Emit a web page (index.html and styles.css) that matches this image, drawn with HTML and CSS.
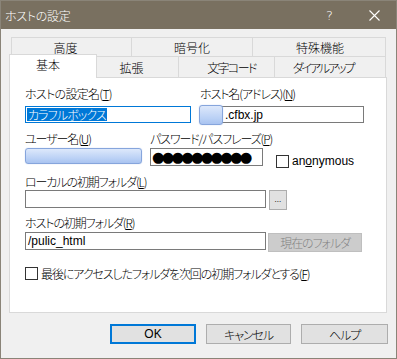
FILE: index.html
```html
<!DOCTYPE html>
<html lang="ja">
<head>
<meta charset="utf-8">
<title>ホストの設定</title>
<link rel="stylesheet" href="styles.css">
</head>
<body>
<div class="window">
  <div class="titlebar">
    <span class="title">ホストの設定</span>
    <span class="qmark">?</span>
    <span class="close"><svg width="11" height="11" viewBox="0 0 11 11"><path d="M0.5 0.5 L10.5 10.5 M10.5 0.5 L0.5 10.5" stroke="#fff" stroke-width="1.1" fill="none"/></svg></span>
  </div>
  <div class="client">
    <div class="tabstrip">
      <div class="tabrow upper">
        <div class="tab t-koudo">高度</div>
        <div class="tab t-angou">暗号化</div>
        <div class="tab t-tokushu">特殊機能</div>
      </div>
      <div class="tabrow lower">
        <div class="tab sel">基本</div>
        <div class="tab t-kakuchou">拡張</div>
        <div class="tab t-moji">文字コード</div>
        <div class="tab t-dial">ダイアルアップ</div>
      </div>
    </div>
    <div class="panel">
      <div class="row row-a">
        <div class="field f-name">
          <div class="label">ホストの設定名(<u>T</u>)</div>
          <div class="edit focus"><span class="selected">カラフルボックス</span></div>
        </div>
        <div class="field f-host">
          <div class="label">ホスト名(アドレス)(<u>N</u>)</div>
          <div class="edit host"><span class="blur blur-host"></span><span class="hosttext">.cfbx.jp</span></div>
        </div>
      </div>
      <div class="row row-b">
        <div class="field f-user">
          <div class="label">ユーザー名(<u>U</u>)</div>
          <div class="blur blur-user"></div>
        </div>
        <div class="field f-pass">
          <div class="label">パスワード/パスフレーズ(<u>P</u>)</div>
          <div class="edit pass"><span class="dots">●●●●●●●●●●</span></div>
        </div>
        <div class="check anon"><span class="box"></span><span class="clabel">an<u>o</u>nymous</span></div>
      </div>
      <div class="row row-c">
        <div class="field f-local">
          <div class="label">ローカルの初期フォルダ(<u>L</u>)</div>
          <div class="line">
            <div class="edit wide"></div>
            <div class="btn dots-btn">...</div>
          </div>
        </div>
      </div>
      <div class="row row-d">
        <div class="field f-remote">
          <div class="label">ホストの初期フォルダ(<u>R</u>)</div>
          <div class="line">
            <div class="edit wide"><span class="val">/pulic_html</span></div>
            <div class="btn disabled">現在のフォルダ</div>
          </div>
        </div>
      </div>
      <div class="check last"><span class="box"></span><span class="clabel">最後にアクセスしたフォルダを次回の初期フォルダとする(<u>F</u>)</span></div>
    </div>
    <div class="buttons">
      <div class="btn push ok">OK</div>
      <div class="btn push cancel">キャンセル</div>
      <div class="btn push helpb">ヘルプ</div>
    </div>
  </div>
</div>
</body>
</html>
```
FILE: styles.css
```css
* { box-sizing: border-box; }
html, body { margin: 0; padding: 0; background: #f0f0f0; }
body {
  font-family: "Noto Sans CJK JP", "Noto Sans", sans-serif;
  font-size: 12px;
  font-weight: 300;
  font-feature-settings: "palt";
  letter-spacing: -1.1px;
  color: #000;
}
u { text-decoration: underline; text-underline-offset: 1px; }
.window {
  width: 397px;
  height: 359px;
  border: 1px solid #8a8478;
  background: #f0f0f0;
  display: flex;
  flex-direction: column;
  overflow: hidden;
}
.titlebar {
  height: 28px;
  background: #797060;
  color: #fff;
  display: flex;
  align-items: center;
  flex-shrink: 0;
}
.title { margin-left: 4px; font-size: 12px; letter-spacing: -0.3px; margin-top: 1px; }
.qmark { margin-left: auto; font-family: "DejaVu Sans", sans-serif; font-size: 13px; font-weight: 300; letter-spacing: 0; margin-right: 36px; }
.close { width: 11px; height: 11px; margin-right: 16px; display: flex; }

.client { padding: 8px 7px 0 8px; display: flex; flex-direction: column; }

.tabstrip { margin-left: 2px; }
.tabrow { display: flex; }
.tab {
  border: 1px solid #d9d9d9;
  border-bottom: none;
  background: #f0f0f0;
  display: flex;
  align-items: center;
  justify-content: center;
  white-space: nowrap;
  line-height: 14px;
  letter-spacing: 0;
}
.tab + .tab { margin-left: -1px; }
.upper { height: 19px; }
.upper .tab { height: 19px; padding-top: 1px; }
.t-koudo { width: 121px; padding-right: 12px; }
.t-angou { width: 122px; }
.t-tokushu { width: 134px; padding-left: 2px; }
.lower { height: 21px; margin-left: -2px; align-items: flex-end; }
.lower .tab { height: 21px; padding-top: 1px; }
.lower .tab.sel {
  width: 88px;
  height: 24px;
  margin-bottom: -1px;
  background: #fff;
  position: relative;
  z-index: 2;
  padding-top: 0;
  padding-bottom: 4px;
  padding-right: 10px;
}
.t-kakuchou { width: 83px; padding-right: 12px; }
.t-moji { width: 97px; padding-left: 10px; letter-spacing: -1.6px; }
.t-dial { width: 112px; padding-right: 14px; letter-spacing: -2.1px; }

.panel {
  position: relative;
  z-index: 1;
  width: 378px;
  height: 236px;
  background: #fff;
  border: 1px solid #d9d9d9;
  padding: 0 0 0 15px;
}
.row { display: flex; }
.label { height: 14px; line-height: 14px; white-space: nowrap; }
.edit {
  border: 1px solid #7a7a7a;
  background: #fff;
  position: relative;
  display: flex;
  align-items: center;
  white-space: nowrap;
}
.edit.focus { border-color: #0078d7; }

.row-a { margin-top: 9px; }
.f-name { width: 166px; }
.f-name .edit { height: 17px; margin-top: 5px; padding-left: 1px; }
.f-name .label { letter-spacing: -0.7px; }
.selected { background: #0078d7; color: #fff; line-height: 13px; height: 13px; padding: 0 1px; letter-spacing: -0.9px; }
.f-host { width: 164px; margin-left: 9px; }
.f-host .edit { height: 17px; margin-top: 5px; }
.blur {
  display: block;
  border: 1px solid #86a5dc;
  border-radius: 3px;
  background: linear-gradient(#dde8fb, #b9d0f5 70%, #a9c3f0);
  box-shadow: 0 0 1px #9fb9e8;
}
.blur-host { position: absolute; left: -2px; top: -2px; width: 24px; height: 20px; }
.hosttext { margin-left: 24px; font-family: "Liberation Sans", sans-serif; font-size: 12px; font-weight: 400; letter-spacing: 0; }

.row-b { margin-top: 9px; align-items: flex-start; height: 34px; }
.f-user { width: 117px; }
.blur-user { width: 117px; height: 16px; margin-top: 2px; }
.f-pass { margin-left: 8px; width: 113px; }
.pass { height: 18px; margin-top: 2px; padding-left: 1px; overflow: hidden; }
.dots { font-family: "DejaVu Sans", sans-serif; font-size: 14.5px; font-weight: 400; letter-spacing: -2.9px; line-height: 16px; }
.check { display: flex; align-items: center; white-space: nowrap; height: 13px; line-height: 13px; }
.box { width: 13px; height: 13px; border: 1px solid #333; background: #fff; flex-shrink: 0; }
.anon { margin-left: 13px; margin-top: 23px; }
.anon .clabel { margin-left: 3px; font-family: "Liberation Sans", sans-serif; font-size: 12px; font-weight: 400; letter-spacing: 0; }

.row-c { margin-top: 9px; }
.line { display: flex; align-items: flex-start; }
.row-c .wide { width: 241px; height: 18px; margin-top: 1px; }
.val { padding-left: 2px; font-family: "Liberation Sans", sans-serif; font-size: 12px; font-weight: 400; letter-spacing: 0; }
.btn {
  display: flex;
  align-items: center;
  justify-content: center;
  white-space: nowrap;
}
.dots-btn {
  width: 18px;
  height: 20px;
  margin-top: 1px;
  margin-left: 3px;
  background: #e1e1e1;
  border: 1px solid #adadad;
  font-size: 9px;
  line-height: 10px;
  letter-spacing: 0;
  padding-bottom: 2px;
}
.row-d { margin-top: 6px; }
.row-d .wide { width: 241px; height: 18px; margin-top: 2px; }
.disabled {
  width: 94px;
  height: 19px;
  margin-top: 3px;
  margin-left: 2px;
  background: #cccccc;
  border: 1px solid #bfbfbf;
  color: #838383;
  font-size: 12px;
}
.last { margin-top: 15px; }
.last .clabel { margin-left: 3px; }

.buttons {
  display: flex;
  justify-content: flex-end;
  margin-top: 11px;
  padding-right: 1px;
}
.push {
  height: 20px;
  width: 86px;
  background: #e1e1e1;
  border: 1px solid #adadad;
  font-size: 12px;
}
.push + .push { margin-left: 10px; }
.ok { border: 2px solid #0078d7; font-family: "Liberation Sans", sans-serif; font-weight: 400; letter-spacing: 0; }
.cancel { width: 85px; }
.helpb { width: 87px; }
```
